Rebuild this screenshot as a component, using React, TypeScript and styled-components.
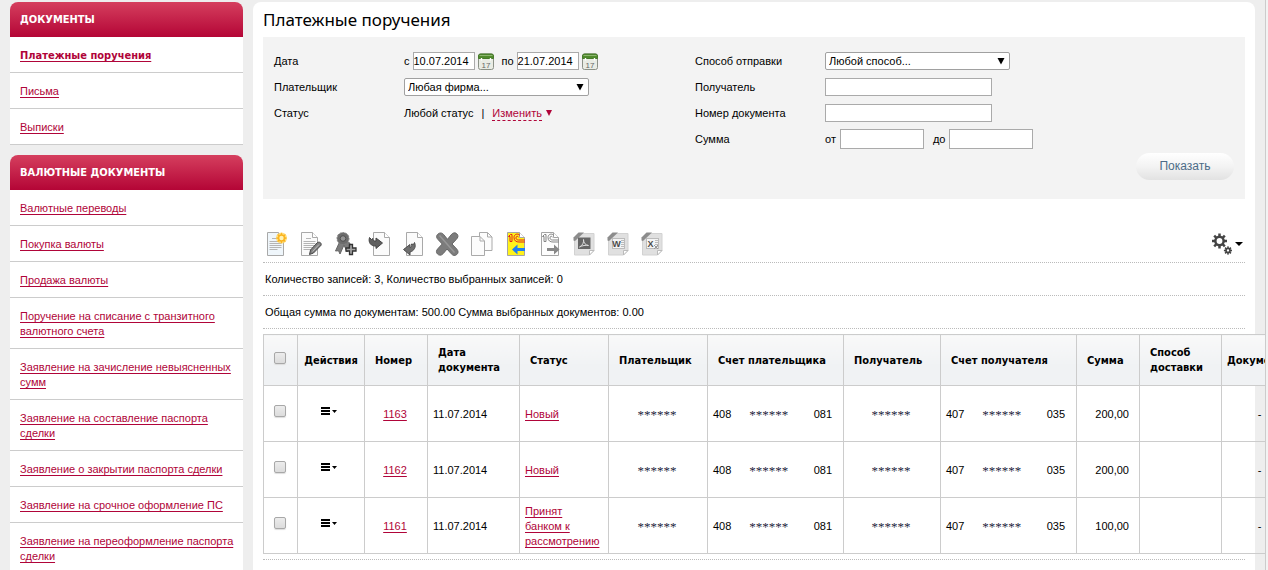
import React from "react";
import styled, { createGlobalStyle } from "styled-components";

const SANS = '"Liberation Sans", Tahoma, sans-serif';
const WIDE = '"Noto Sans", Tahoma, sans-serif';
const BOLD = '"DejaVu Sans Condensed", "DejaVu Sans", Tahoma, sans-serif';
const RED = "#b00439";
const LINE = "#cccccc";

const GlobalStyle = createGlobalStyle`
  * { box-sizing: border-box; }
  body {
    margin: 0;
    background: #f3f3f3;
    color: #000;
    font: 11px/15px ${SANS};
  }
  input, select, button { font: inherit; color: inherit; margin: 0; }
`;

const Frame = styled.div`
  display: flex;
  align-items: stretch;
  gap: 10px;
  height: 100vh;
  margin-right: 2px;
  padding: 2px 10px 0;
  background: #eee;
  border-right: 1px solid ${LINE};
  overflow-x: hidden;
  overflow-y: auto;
  scrollbar-width: none;
`;

const Sidebar = styled.nav`
  display: flex;
  flex-direction: column;
  flex: none;
  gap: 10px;
  width: 233px;
`;

const MenuHeading = styled.h2`
  margin: 0;
  padding: 0 10px;
  border-radius: 8px 8px 0 0;
  background: linear-gradient(#d53f5e, #b40536);
  color: #fff;
  font: bold 11px/35px ${BOLD};
`;

const MenuList = styled.ul`
  margin: 0;
  padding: 0;
  list-style: none;
  background: #fff;
`;

const MenuItem = styled.li`
  padding: 11px 8px 9px 10px;
  border-bottom: 1px solid ${LINE};
`;

const Link = styled.a<{ $active?: boolean }>`
  display: inline-block;
  vertical-align: top;
  color: ${RED};
  text-decoration: underline;
  text-underline-offset: 2px;
  font-family: ${(p) => (p.$active ? BOLD : SANS)};
  font-weight: ${(p) => (p.$active ? "bold" : "normal")};
`;

const Main = styled.main`
  flex: 1;
  min-width: 0;
  min-height: max-content;
  padding: 0 10px;
  background: #fff;
  border-radius: 8px 8px 0 0;
`;

const Title = styled.h1`
  margin: 0;
  font: 17px/35px ${WIDE};
`;

const Filter = styled.form`
  padding: 11px 11px 19px;
  background: #f3f3f3;
`;

const FilterColumns = styled.div`
  display: grid;
  grid-template-columns: 421px 1fr;
  margin-bottom: 1px;
`;

const FieldRow = styled.div`
  display: flex;
  align-items: center;
  height: 26px;
`;

const FieldLabel = styled.label`
  flex: none;
  width: 130px;
`;

const FieldText = styled.label<{ $after?: number }>`
  margin-right: ${(p) => p.$after ?? 3}px;
`;

const RangeFields = styled.span`
  display: flex;
  align-items: center;
  gap: 9px;
`;

const RangeField = styled.span`
  display: flex;
  align-items: center;
  gap: 4px;
`;

const TextInput = styled.input<{ $width: number; $tall?: boolean }>`
  width: ${(p) => p.$width}px;
  height: ${(p) => (p.$tall ? 20 : 18)}px;
  padding: 0;
  border: 1px solid #aaa;
  border-radius: 0;
  background: #fff;
  outline: none;
`;

const SelectBox = styled.span`
  position: relative;
  width: 185px;
  height: 18px;
  svg {
    position: absolute;
    right: 5px;
    top: 5px;
    pointer-events: none;
  }
`;

const Select = styled.select`
  display: block;
  width: 100%;
  height: 18px;
  padding: 0 3px;
  border: 1px solid #a0a0a0;
  border-radius: 2px;
  background: #fff;
  appearance: none;
`;

const IconButton = styled.button`
  display: flex;
  align-items: center;
  padding: 0;
  border: 0;
  background: none;
`;

const CalendarButton = styled(IconButton)`
  margin: 0 8px 0 3px;
`;

const ChangeLink = styled.a`
  color: ${RED};
  line-height: 13px;
  text-decoration: none;
  border-top: 1px solid transparent;
  border-bottom: 1px dashed ${RED};
`;

const FilterActions = styled.div`
  display: flex;
  justify-content: flex-end;
`;

const ShowButton = styled.button`
  width: 98px;
  height: 27px;
  padding: 0;
  border: 0;
  border-radius: 14px;
  background: linear-gradient(#fff, #f3f3f3 50%, #e2e2e2);
  color: #4d6c88;
  font: 12px/27px ${SANS};
`;

const Toolbar = styled.div`
  display: flex;
  align-items: center;
  gap: 10px;
  margin-top: 27px;
  padding: 6px 2px;
`;

const Settings = styled(IconButton)`
  gap: 3px;
  margin-left: auto;
`;

const InfoRow = styled.div`
  padding: 9px 2px 8px;
  border-top: 1px dotted #bbb;
`;

const TableArea = styled.div`
  padding: 5px 0;
  border-top: 1px dotted #bbb;
  border-bottom: 1px dotted #bbb;
`;

const Table = styled.table`
  width: 1036px;
  table-layout: fixed;
  border-collapse: collapse;
`;

const Th = styled.th<{ $kind?: "check" | "center" | "tight" }>`
  height: 51px;
  padding: ${(p) =>
    p.$kind === "check" ? "0 2px 4px 0" : p.$kind === "center" ? "0" : p.$kind === "tight" ? "0 5px" : "0 0 0 10px"};
  border: 1px solid ${LINE};
  background: linear-gradient(#f9f9f9, #f0f2f4 60%);
  font: bold 11px/15px ${BOLD};
  text-align: ${(p) => (p.$kind === "center" ? "center" : "left")};
`;

const Td = styled.td<{ $align?: "left" | "center" | "right"; $raised?: boolean }>`
  height: 56px;
  padding: ${(p) => (p.$raised ? "0 2px 5px 0" : p.$align === "right" ? "2px 10px 0 5px" : "2px 7px 0 5px")};
  border: 1px solid ${LINE};
  text-align: ${(p) => p.$align ?? "left"};
`;

const Check = styled.input`
  display: block;
  width: 12px;
  height: 12px;
  margin: 0 auto;
  border: 1px solid #a8a8a8;
  border-radius: 2px;
  background: linear-gradient(#ececec, #dcdcdc);
  box-shadow: 0 1px 1px #ddd;
  appearance: none;
`;

const MenuTrigger = styled(IconButton)`
  margin: 0 auto;
`;

const Account = styled.div`
  display: flex;
  align-items: center;
  gap: 18px;
  padding-right: 4px;
`;

const AccountEnd = styled.span`
  margin-left: auto;
`;

const Stars = styled.span`
  color: #1c1c3c;
  font: 13px/15px "Liberation Serif", serif;
`;

const Arrow = () => (
  <svg width="8" height="8" viewBox="0 0 8 8">
    <path d="M0.5 1h7L4 7.5z" fill="#000" />
  </svg>
);

const CalendarIcon = () => (
  <svg width="16" height="17" viewBox="0 0 16 17">
    <rect x="0.5" y="1" width="15" height="15.5" rx="2" fill="#e9ece4" stroke="#8b9186" />
    <path d="M0.500 5.500V3a2 2 0 0 1 2-2h11a2 2 0 0 1 2 2v2.500z" fill="#4f8a2c" stroke="#477a2b" />
    <path d="M1.500 2.500h13" stroke="#8db56f" />
    <path d="M3.500 5v2.500M12.500 5v2.500" stroke="#fff" strokeWidth="1.400" />
    <text x="8" y="14.500" textAnchor="middle" fontSize="8" fontFamily="Liberation Sans" fill="#666">17</text>
  </svg>
);

const Svg = ({ children }: { children: React.ReactNode }) => (
  <svg width="24" height="24" viewBox="0 0 24 24" fill="none">{children}</svg>
);

const Page = ({ x = 2, fill = "#fbfbfb" }: { x?: number; fill?: string }) => (
  <g transform={`translate(${x} 0)`}>
    <path d="M0.5 0.5h11l5 5v18H0.5z" fill={fill} stroke="#a9a9a9" />
    <path d="M11.5 0.5v5h5" fill="#fff" stroke="#a9a9a9" />
  </g>
);

const TextLines = () => (
  <path d="M7 6.500h5M4.500 9.500h12M4.500 11.500h12M4.500 13.500h12M4.500 15.500h12M4.500 17.500h8" stroke="#b5b5b5" />
);

const NewIcon = () => (
  <Svg>
    <Page fill="#eff6fb" />
    <TextLines />
    <circle cx="16.500" cy="6" r="5.500" fill="#ffd766" opacity="0.850" />
    <path d="M16.500 0.500l1.300 2.600 2.800-.9-.9 2.700 2.500 1.100-2.500 1.200.9 2.700-2.800-.9-1.300 2.600-1.300-2.600-2.800.9.9-2.700L10.800 6l2.500-1.100-.9-2.700 2.800.9z" fill="#fbb31c" />
    <circle cx="16.500" cy="6" r="2.200" fill="#fff2b5" />
  </Svg>
);

const EditIcon = () => (
  <Svg>
    <Page />
    <TextLines />
    <path d="M10.500 22.500l1-4.500 7-7.500c2-1 4.500.5 3.500 2.800l-7.500 7.700z" fill="#808080" stroke="#444" />
    <path d="M13.500 19.500l6.500-7" stroke="#bbb" />
  </Svg>
);

const SignIcon = () => (
  <Svg>
    <path d="M7 9L2.500 19l3-.3L7 22l4-9 3 7 3-9z" fill="#7c7c7c" stroke="#666" />
    <circle cx="10" cy="6.500" r="6" fill="#6c6c6c" />
    <circle cx="10" cy="6.500" r="6" stroke="#808080" strokeDasharray="2 1" />
    <circle cx="10" cy="6.500" r="2.800" fill="#949494" stroke="#505050" />
    <path d="M16.500 12.500h3V16H23v3h-3.500v3.500h-3V19H13v-3h3.500z" fill="#a5a5a5" stroke="#333" strokeWidth="1.300" />
  </Svg>
);

const ImportIcon = () => (
  <Svg>
    <Page x={6} />
    <path d="M2.500 5.500c-1.500 5 1.500 9 6.500 8.500v2.500l6.500-5.500L9 6v3C7 9.500 5.500 8 6 6.500L4.500 7.500z" fill="#5f5f5f" stroke="#444" />
  </Svg>
);

const ExportIcon = () => (
  <Svg>
    <Page x={5} />
    <path d="M13.500 10.500c2 4.500-.5 8.500-4.500 9.500v3l-6.500-5.500L9 12.500v3c1.500-.3 2-1.500 1.500-3.500l2 .5z" fill="#6f6f6f" stroke="#4c4c4c" />
  </Svg>
);

const DeleteIcon = () => (
  <Svg>
    <path d="M3 2C5 .3 7.500.8 9 3l3.500 4.300L16 3c2-2.700 4.500-2.700 6-1s1.200 3.500-.8 5.500L17 12l4.700 5c1.800 2 1.800 4 .1 5.500s-3.800 1.300-5.500-.7L12 17l-3.700 4.500c-2 2.300-4.300 2-5.800.5s-1.500-3.500.5-5.500L7.200 12 3 7.500C1 5.300 1.200 3.500 3 2z" fill="#7c7c7c" stroke="#666" />
    <path d="M4.500 3.500l15 17" stroke="#979797" strokeWidth="1.500" />
  </Svg>
);

const CopyIcon = () => (
  <Svg>
    <path d="M10.500 0.500h8L23 5v13.500H10.500z" fill="#fcfcfc" stroke="#aaa" />
    <path d="M18.500 0.500V5H23" stroke="#aaa" />
    <path d="M2.500 4.500H11L15.500 9v14.500h-13z" fill="#fcfcfc" stroke="#aaa" />
    <path d="M11 4.500V9h4.500" stroke="#aaa" />
  </Svg>
);

const OneCIcon = ({ active }: { active?: boolean }) => (
  <Svg>
    <path d="M4.500 0.500h12l5 5v18h-17z" fill={active ? "#fff21a" : "#fdfdfd"} stroke="#a5a5a5" />
    <path d="M16.500 0.500v5h5" fill="#fff" stroke="#a5a5a5" />
    <path
      d="M5.500 4.500h1.500V9.500h2V2.500H7.500L5.500 4.500M17 3.500C15 1 11 2 11 5.500s2.500 4.500 5 4.500h6M15.500 5c-1-1.200-2.500-.8-2.500.8 0 1.200.8 2.200 2.500 2.200H22"
      stroke={active ? "#e0251b" : "#858585"}
    />
    {active ? (
      <path d="M9 17.500l5.500-5V16H22v3h-7.500v3.500z" fill="#1f7ff0" />
    ) : (
      <path d="M22.500 17.500l-5.500-5V16h-7v3h7v3.500z" fill="#888" />
    )}
  </Svg>
);

const FileIcon = ({ kind }: { kind: "pdf" | "W" | "X" }) => (
  <Svg>
    <path d="M9 1.500h14v17L18.500 23H3.500V7z" fill="#e0e0e0" stroke="#d2d2d2" />
    <path d="M23 18.500h-4.500V23z" fill="#fff" stroke="#bbb" />
    <path d="M2.500 8.500v-3l5-5H13L4 9z" fill="#8c8c8c" />
    {kind === "pdf" ? (
      <>
        <rect x="7" y="5.500" width="12.500" height="11.500" fill="#666" />
        <path d="M8.500 15c3-1.500 4.500-4.500 4-7.500 0 3.500 2 5.500 5 6-3-.5-6 0-9 1.500z" stroke="#ddd" />
      </>
    ) : (
      <>
        <rect x="7.500" y="6.500" width="12" height="10" fill="#f4f4f4" stroke="#bbb" />
        <path d="M16 8.500h3M16 10.500h3M16 12.500h3M16 14.500h3" stroke="#bbb" />
        <text x="11.500" y="15" textAnchor="middle" fontSize="9" fontWeight="bold" fontFamily="Liberation Sans" fill="#4a4a4a">{kind}</text>
        {kind === "X" && <path d="M15 13l4 4M19 13l-4 4" stroke="#999" />}
      </>
    )}
  </Svg>
);

const Gear = ({ cx, cy, r, w }: { cx: number; cy: number; r: number; w: number }) => (
  <g transform={`translate(${cx} ${cy})`}>
    {[0, 45, 90, 135, 180, 225, 270, 315].map((a) => (
      <rect key={a} x={-w / 2} y={-r - w} width={w} height={w + 1} fill="#444" transform={`rotate(${a})`} />
    ))}
    <circle r={r - w / 3} fill="#fff" stroke="#444" strokeWidth={w} />
  </g>
);

const GearsIcon = () => (
  <svg width="20" height="22" viewBox="0 0 20 22">
    <Gear cx={7.5} cy={8} r={5} w={2.5} />
    <Gear cx={16} cy={17.5} r={2.5} w={1.6} />
  </svg>
);

const RowMenuIcon = () => (
  <svg width="18" height="10" viewBox="0 0 18 10">
    <path d="M0 2h9M0 5h9M0 8h9" stroke="#000" strokeWidth="2" />
    <path d="M11 4h5l-2.500 3z" fill="#000" />
  </svg>
);

const menus = [
  { title: "ДОКУМЕНТЫ", items: ["Платежные поручения", "Письма", "Выписки"] },
  {
    title: "ВАЛЮТНЫЕ ДОКУМЕНТЫ",
    items: [
      "Валютные переводы",
      "Покупка валюты",
      "Продажа валюты",
      "Поручение на списание с транзитного валютного счета",
      "Заявление на зачисление невыясненных сумм",
      "Заявление на составление паспорта сделки",
      "Заявление о закрытии паспорта сделки",
      "Заявление на срочное оформление ПС",
      "Заявление на переоформление паспорта сделки",
    ],
  },
];

const tools: [string, React.ReactNode][] = [
  ["Создать", <NewIcon />],
  ["Редактировать", <EditIcon />],
  ["Подписать", <SignIcon />],
  ["Импорт", <ImportIcon />],
  ["Экспорт", <ExportIcon />],
  ["Удалить", <DeleteIcon />],
  ["Копировать", <CopyIcon />],
  ["Импорт из 1С", <OneCIcon active />],
  ["Экспорт в 1С", <OneCIcon />],
  ["PDF", <FileIcon kind="pdf" />],
  ["Word", <FileIcon kind="W" />],
  ["Excel", <FileIcon kind="X" />],
];

const columnWidths = [34, 67, 63, 92, 89, 99, 136, 97, 136, 63, 82, 78];
const headings = [
  "Номер", "Дата документа", "Статус", "Плательщик", "Счет плательщика",
  "Получатель", "Счет получателя", "Сумма", "Способ доставки",
];

const rows = [
  { number: "1163", date: "11.07.2014", status: "Новый", sum: "200,00" },
  { number: "1162", date: "11.07.2014", status: "Новый", sum: "200,00" },
  { number: "1161", date: "11.07.2014", status: "Принят банком к рассмотрению", sum: "100,00" },
];

const MaskedAccount = ({ start, end }: { start: string; end: string }) => (
  <Account>
    <span>{start}</span>
    <Stars>******</Stars>
    <AccountEnd>{end}</AccountEnd>
  </Account>
);

const DropDown = ({ id, option }: { id: string; option: string }) => (
  <SelectBox>
    <Select id={id}>
      <option>{option}</option>
    </Select>
    <Arrow />
  </SelectBox>
);

export default function App() {
  return (
    <>
      <GlobalStyle />
      <Frame>
        <Sidebar>
          {menus.map((menu, m) => (
            <section key={menu.title}>
              <MenuHeading>{menu.title}</MenuHeading>
              <MenuList>
                {menu.items.map((item, i) => (
                  <MenuItem key={item}>
                    <Link href="#" $active={m === 0 && i === 0}>{item}</Link>
                  </MenuItem>
                ))}
              </MenuList>
            </section>
          ))}
        </Sidebar>

        <Main>
          <Title>Платежные поручения</Title>
          <Filter>
            <FilterColumns>
              <div>
                <FieldRow>
                  <FieldLabel htmlFor="date-from">Дата</FieldLabel>
                  <FieldText htmlFor="date-from">с</FieldText>
                  <TextInput id="date-from" $width={62} defaultValue="10.07.2014" />
                  <CalendarButton type="button" aria-label="Календарь"><CalendarIcon /></CalendarButton>
                  <FieldText htmlFor="date-to">по</FieldText>
                  <TextInput id="date-to" $width={62} defaultValue="21.07.2014" />
                  <CalendarButton type="button" aria-label="Календарь"><CalendarIcon /></CalendarButton>
                </FieldRow>
                <FieldRow>
                  <FieldLabel htmlFor="payer">Плательщик</FieldLabel>
                  <DropDown id="payer" option="Любая фирма..." />
                </FieldRow>
                <FieldRow>
                  <FieldLabel as="span">Статус</FieldLabel>
                  <FieldText as="span" $after={8}>Любой статус</FieldText>
                  <FieldText as="span" $after={8}>|</FieldText>
                  <ChangeLink href="#">Изменить</ChangeLink>
                  <svg width="14" height="8" viewBox="0 0 14 8">
                    <path d="M4 1h6L7 7z" fill={RED} />
                  </svg>
                </FieldRow>
              </div>
              <div>
                <FieldRow>
                  <FieldLabel htmlFor="method">Способ отправки</FieldLabel>
                  <DropDown id="method" option="Любой способ..." />
                </FieldRow>
                <FieldRow>
                  <FieldLabel htmlFor="recipient">Получатель</FieldLabel>
                  <TextInput id="recipient" $width={167} />
                </FieldRow>
                <FieldRow>
                  <FieldLabel htmlFor="doc-number">Номер документа</FieldLabel>
                  <TextInput id="doc-number" $width={167} />
                </FieldRow>
                <FieldRow>
                  <FieldLabel htmlFor="sum-from">Сумма</FieldLabel>
                  <RangeFields>
                    <RangeField>
                      <label htmlFor="sum-from">от</label>
                      <TextInput id="sum-from" $width={84} $tall />
                    </RangeField>
                    <RangeField>
                      <label htmlFor="sum-to">до</label>
                      <TextInput id="sum-to" $width={84} $tall />
                    </RangeField>
                  </RangeFields>
                </FieldRow>
              </div>
            </FilterColumns>
            <FilterActions>
              <ShowButton type="button">Показать</ShowButton>
            </FilterActions>
          </Filter>

          <Toolbar>
            {tools.map(([label, icon]) => (
              <IconButton key={label} type="button" aria-label={label}>{icon}</IconButton>
            ))}
            <Settings type="button" aria-label="Настройки">
              <GearsIcon />
              <svg width="8" height="4" viewBox="0 0 8 4"><path d="M0 0h8L4 4z" fill="#000" /></svg>
            </Settings>
          </Toolbar>
          <InfoRow>Количество записей: 3, Количество выбранных записей: 0</InfoRow>
          <InfoRow>Общая сумма по документам: 500.00 Сумма выбранных документов: 0.00</InfoRow>

          <TableArea>
            <Table>
              <colgroup>
                {columnWidths.map((w, i) => <col key={i} width={w} />)}
              </colgroup>
              <thead>
                <tr>
                  <Th $kind="check"><Check type="checkbox" aria-label="Выбрать все" /></Th>
                  <Th $kind="center">Действия</Th>
                  {headings.map((h) => <Th key={h}>{h}</Th>)}
                  <Th $kind="tight">Документ</Th>
                </tr>
              </thead>
              <tbody>
                {rows.map((row) => (
                  <tr key={row.number}>
                    <Td $raised><Check type="checkbox" aria-label={`Выбрать ${row.number}`} /></Td>
                    <Td $raised><MenuTrigger type="button" aria-label="Действия"><RowMenuIcon /></MenuTrigger></Td>
                    <Td $align="center"><Link href="#">{row.number}</Link></Td>
                    <Td>{row.date}</Td>
                    <Td><Link href="#">{row.status}</Link></Td>
                    <Td $align="center"><Stars>******</Stars></Td>
                    <Td><MaskedAccount start="408" end="081" /></Td>
                    <Td $align="center"><Stars>******</Stars></Td>
                    <Td><MaskedAccount start="407" end="035" /></Td>
                    <Td $align="right">{row.sum}</Td>
                    <Td />
                    <Td $align="center">-</Td>
                  </tr>
                ))}
              </tbody>
            </Table>
          </TableArea>
        </Main>
      </Frame>
    </>
  );
}
